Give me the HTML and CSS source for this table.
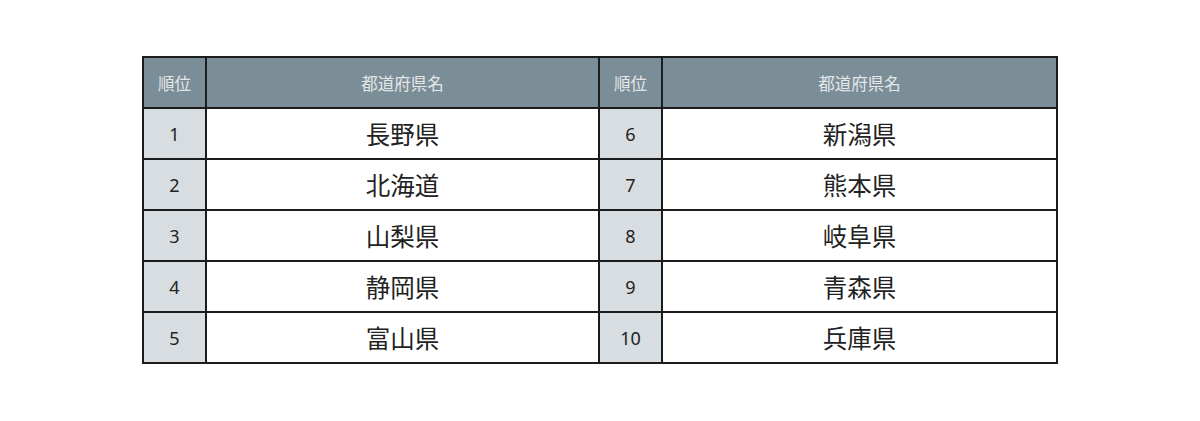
FILE: index.html
```html
<!DOCTYPE html>
<html lang="ja">
<head>
<meta charset="utf-8">
<link rel="stylesheet" href="styles.css">
</head>
<body>
<table class="rank-table">
  <colgroup>
    <col class="c-rank"><col class="c-name"><col class="c-rank"><col class="c-name2">
  </colgroup>
  <thead>
    <tr><th>順位</th><th>都道府県名</th><th>順位</th><th>都道府県名</th></tr>
  </thead>
  <tbody>
    <tr><td class="rank">1</td><td class="name">長野県</td><td class="rank">6</td><td class="name">新潟県</td></tr>
    <tr><td class="rank">2</td><td class="name">北海道</td><td class="rank">7</td><td class="name">熊本県</td></tr>
    <tr><td class="rank">3</td><td class="name">山梨県</td><td class="rank">8</td><td class="name">岐阜県</td></tr>
    <tr><td class="rank">4</td><td class="name">静岡県</td><td class="rank">9</td><td class="name">青森県</td></tr>
    <tr><td class="rank">5</td><td class="name">富山県</td><td class="rank">10</td><td class="name">兵庫県</td></tr>
  </tbody>
</table>
</body>
</html>
```
FILE: styles.css
```css
html, body {
  margin: 0;
  padding: 0;
  background: #ffffff;
}
body {
  padding-top: 56px;
  font-family: "Noto Sans CJK JP", "Noto Sans", sans-serif;
}
.rank-table {
  margin: 0 auto;
  width: 914px;
  border-collapse: collapse;
  table-layout: fixed;
}
.c-rank { width: 63px; }
.c-name { width: 393px; }
.c-name2 { width: 395px; }
.rank-table th,
.rank-table td {
  border: 2px solid #1c1c1c;
  padding: 0;
  text-align: center;
  vertical-align: middle;
}
.rank-table th {
  height: 49px;
  background: #7b8d96;
  color: #e3e7e9;
  font-weight: 400;
  font-size: 16.5px;
}
.rank-table td {
  height: 49px;
}
.rank {
  background: #d8dde1;
  color: #222222;
  font-size: 18px;
  font-family: "Noto Sans", "Noto Sans CJK JP", sans-serif;
}
.name {
  background: #ffffff;
  color: #222222;
  font-size: 24.5px;
}
```
